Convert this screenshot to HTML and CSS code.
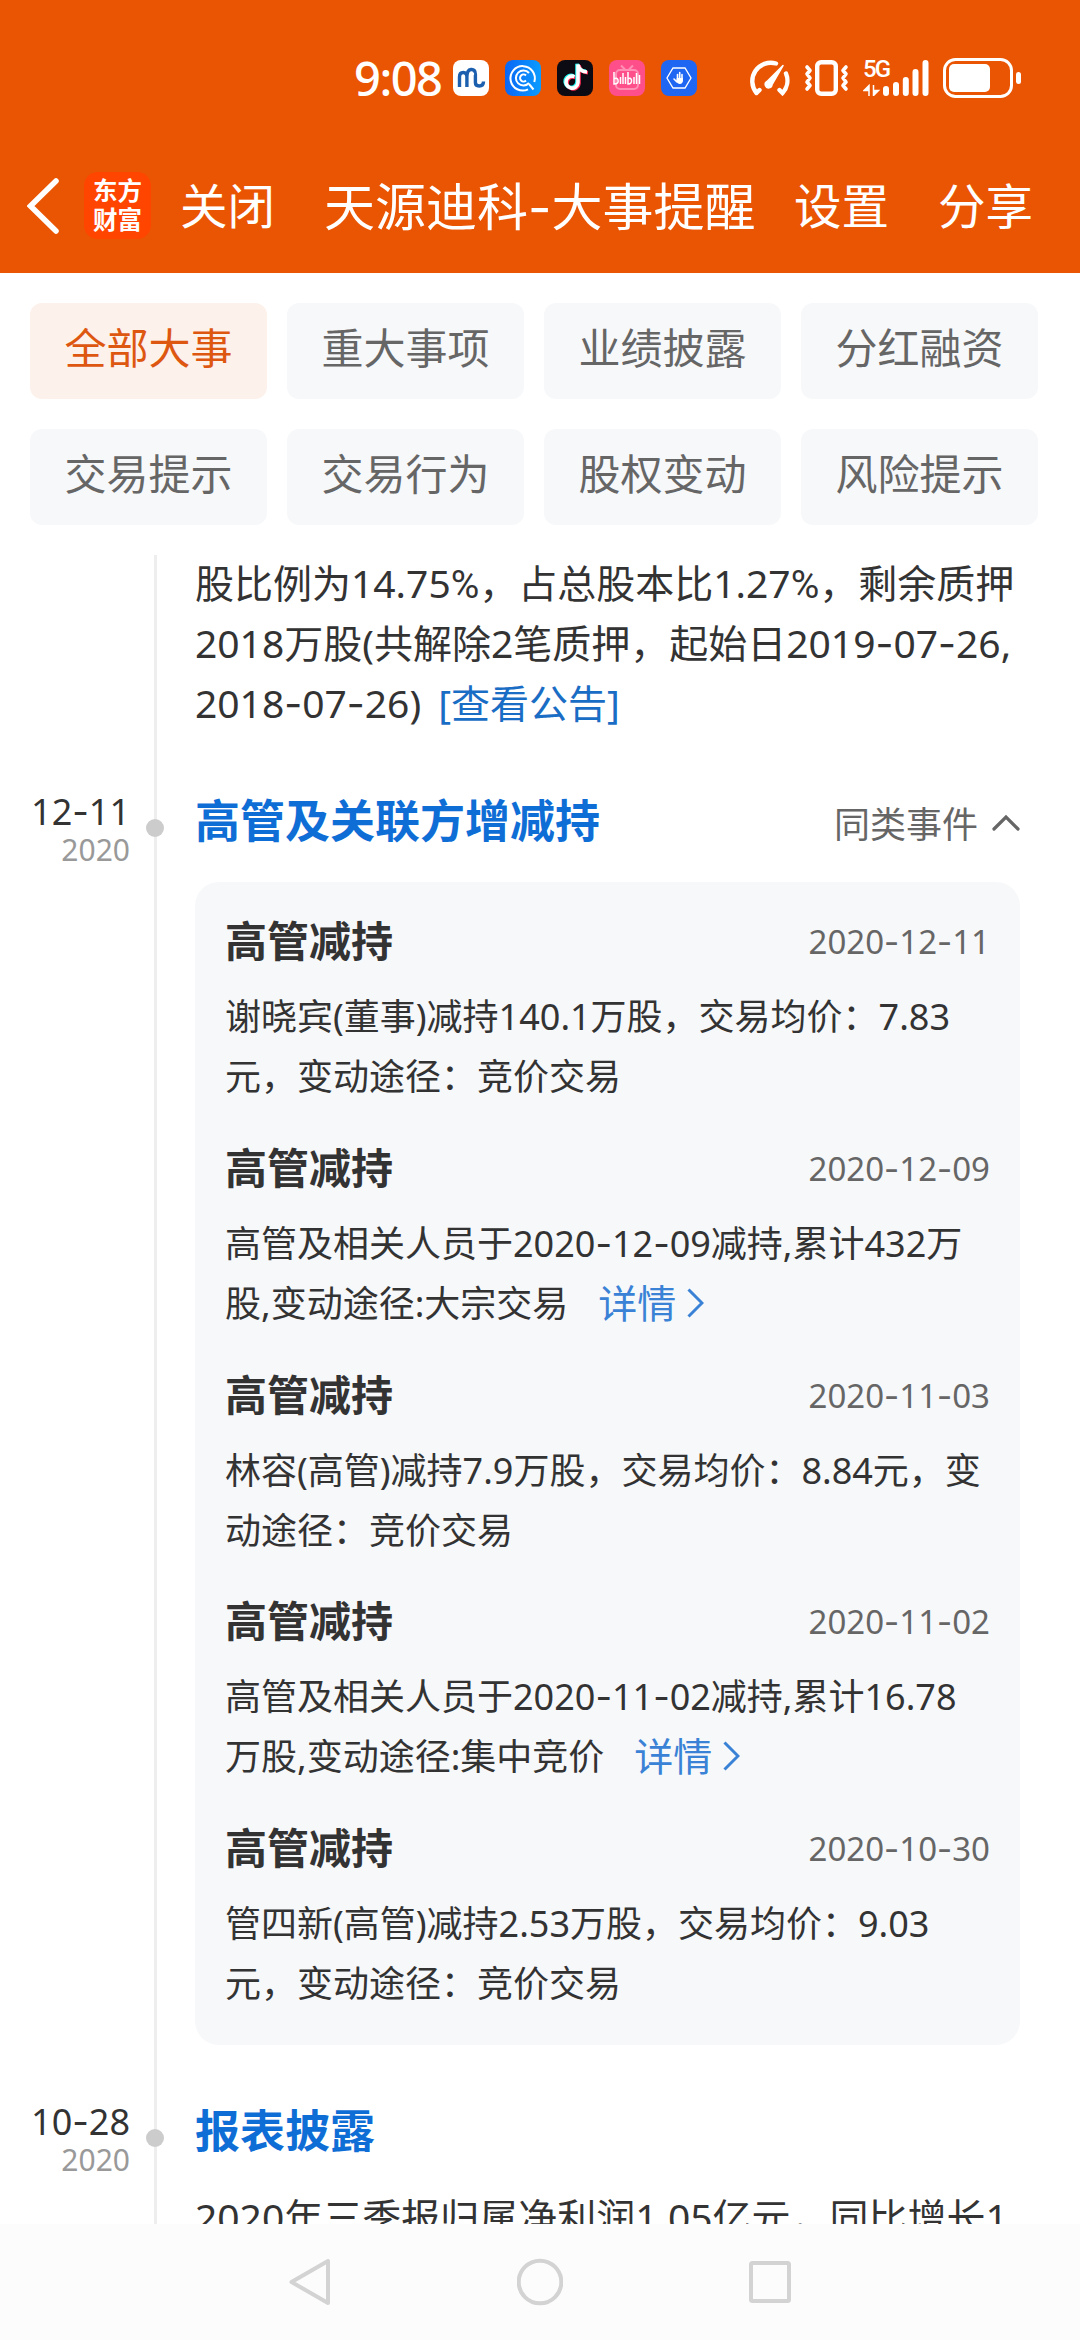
FILE: index.html
```html
<!DOCTYPE html>
<html lang="zh-CN">
<head>
    <meta charset="UTF-8">
    <meta name="viewport" content="width=device-width, initial-scale=1.0">
    <title>天源迪科-大事提醒</title>
    <link rel="stylesheet" href="styles.css">
</head>
<body>
    <div class="screen">
        <div class="status-bar">
            <span class="clock">9:08</span>
            <div class="app-icons">
                <svg width="36" height="36" viewBox="0 0 36 36">
                    <rect width="36" height="36" rx="8" fill="#fff"/>
                    <path d="M6.500 27V17q0-4.500 3.700-4.500t3.700 4.500v10M13.900 17q0-7 4-7.500 4.500-.5 4.500 5v8q0 3.500 3.800 3.500 4.300 0 4.300-4.500" fill="none" stroke="#1b5fae" stroke-width="3.400"/>
                    <circle cx="20" cy="14" r="1.200" fill="#fff"/>
                </svg>
                <svg width="36" height="36" viewBox="0 0 36 36">
                    <defs>
                        <linearGradient id="blue" x1="0" x2="1"><stop offset="0" stop-color="#0a66f5"/><stop offset="1" stop-color="#0b9cff"/></linearGradient>
                    </defs>
                    <rect width="36" height="36" rx="8" fill="url(#blue)"/>
                    <g fill="none" stroke="#fff" stroke-width="2">
                        <path d="M23 29.300A12.200 12.200 0 1 1 29.300 22M24 24l4.500 5.500"/>
                        <path d="M24 23a7.500 7.500 0 1 1 0-10"/>
                        <path d="M21 20.500a3.500 3.500 0 1 1 0-5"/>
                    </g>
                </svg>
                <svg width="36" height="36" viewBox="0 0 36 36">
                    <rect width="36" height="36" rx="8" fill="#0c0b14"/>
                    <g fill="none" stroke-width="3.600">
                        <path d="M17.500 16.700a6 6 0 1 0 3.500 6V4.500q1 7 9 7.500" stroke="#fe2c55" transform="translate(1 .8)"/>
                        <path d="M17.500 16.700a6 6 0 1 0 3.500 6V4.500q1 7 9 7.500" stroke="#25f4ee" transform="translate(-1 -.8)"/>
                        <path d="M17.500 16.700a6 6 0 1 0 3.500 6V4.500q1 7 9 7.500" stroke="#fff"/>
                    </g>
                </svg>
                <svg width="36" height="36" viewBox="0 0 36 36">
                    <rect width="36" height="36" rx="8" fill="#ff4f8b"/>
                    <rect x="7" y="10" width="22" height="19" rx="4" fill="none" stroke="#ff8fb4" stroke-width="2"/>
                    <path d="M12 5.500l4 4M24 5.500l-4 4" stroke="#ff8fb4" stroke-width="2"/>
                    <path d="M5 12v12q5 0 4-4-1-3-4-1M11.500 17v7M14 13v11M16.500 17v7M19 12v12q4 0 3.500-4-1-3-3.500-1M25 17v7M27.500 13v11M30.500 15v9" fill="none" stroke="#fff" stroke-width="1.500"/>
                </svg>
                <svg width="36" height="36" viewBox="0 0 36 36">
                    <rect width="36" height="36" rx="8" fill="#1f66f2"/>
                    <path d="M12 8h12l6 10-6 10H12L6 18z" fill="none" stroke="#fff" stroke-width="1.300"/>
                    <path d="M13 19l3 3M16.500 21v-6.500M18.700 20v-7.500M21 21v-6.500" stroke="#fff" stroke-width="1.600" stroke-linecap="round"/>
                    <path d="M15.700 18h6.200v3q-.5 3-3 3t-3.500-3z" fill="#fff"/>
                </svg>
            </div>
            <div class="sys-icons">
                <svg width="42" height="36" viewBox="0 0 42 36" fill="none" stroke="#fff" stroke-width="4.400" stroke-linecap="round">
                    <path d="M8.500 33A18.500 18.500 0 0 1 28 3.500M8.500 33l3-3M38 13.500A18.500 18.500 0 0 1 34.500 33l-3-3"/>
                    <path d="M35 5.500L24 24.500a3.400 3.400 0 1 1-5-3z" fill="#fff" stroke-width="1.500" stroke-linejoin="round"/>
                </svg>
                <svg width="45" height="36" viewBox="0 0 45 36" fill="none" stroke="#fff" stroke-linecap="round" stroke-linejoin="round">
                    <rect x="13.200" y="2.200" width="18.600" height="31.600" rx="4" stroke-width="4.400"/>
                    <path d="M3 7l3 3.500-3 3.500 3 4-3 4 3 3.500-3 3.500M42 7l-3 3.500 3 3.500-3 4 3 4-3 3.500 3 3.500" stroke-width="3.600"/>
                </svg>
                <div class="network">
                    <span class="net-type">5G</span>
                    <svg width="68" height="36" viewBox="0 0 68 36">
                        <path d="M6 36V25.500L1 30.500h5M10.500 25v10.500l5-5h-5" fill="#fff" stroke="#fff" stroke-width="1.500"/>
                        <g stroke="#fff" stroke-width="6" stroke-linecap="round">
                            <path d="M23 29v4M33 25v8M42.800 20v13M52.500 12v21M62.500 3v30"/>
                        </g>
                    </svg>
                </div>
                <svg class="battery" width="78" height="40" viewBox="0 0 78 40">
                    <rect x="1.500" y="1.500" width="67" height="37" rx="11" fill="none" stroke="#fff" stroke-width="3"/>
                    <rect x="6" y="6" width="41" height="28" rx="5" fill="#fff"/>
                    <rect x="73" y="14" width="5" height="12" rx="2.500" fill="#fff"/>
                </svg>
            </div>
        </div>

        <div class="header">
            <svg class="back" width="32" height="56" viewBox="0 0 32 56">
                <path d="M29 3L3.500 28 29 53" fill="none" stroke="#fff" stroke-width="5.500" stroke-linecap="round"/>
            </svg>
            <div class="logo">东方<br>财富</div>
            <span class="close">关闭</span>
            <h1>天源迪科<i>-</i>大事提醒</h1>
            <span class="setting">设置</span>
            <span class="share">分享</span>
        </div>

        <div class="tabs">
            <div class="tab active">全部大事</div>
            <div class="tab">重大事项</div>
            <div class="tab">业绩披露</div>
            <div class="tab">分红融资</div>
            <div class="tab">交易提示</div>
            <div class="tab">交易行为</div>
            <div class="tab">股权变动</div>
            <div class="tab">风险提示</div>
        </div>

        <div class="timeline">
            <div class="event first">
                <div class="date"></div>
                <div class="axis"></div>
                <div class="content">
                    <p class="text">股比例为14.75<b>%</b>，占总股本比1.27<b>%</b>，剩余质押<br>2018万股(共解除2笔质押，起始日2019<i>-</i>07<i>-</i>26,<br>2018<i>-</i>07<i>-</i>26) <a>[查看公告]</a></p>
                </div>
            </div>

            <div class="event second">
                <div class="date">
                    <div class="day">12<i>-</i>11</div>
                    <div class="year">2020</div>
                </div>
                <div class="axis"><span class="dot"></span></div>
                <div class="content">
                    <div class="event-head">
                        <h2>高管及关联方增减持</h2>
                        <span class="more">同类事件
                            <svg width="28" height="17" viewBox="0 0 28 17"><path d="M2 15L14 3l12 12" fill="none" stroke="#666" stroke-width="3.200" stroke-linecap="round"/></svg>
                        </span>
                    </div>
                    <div class="card">
                        <div class="item">
                            <div class="item-head"><h3>高管减持</h3><span>2020<i>-</i>12<i>-</i>11</span></div>
                            <p>谢晓宾(董事)减持140.1万股，交易均价：7.83<br>元，变动途径：竞价交易</p>
                        </div>
                        <div class="item">
                            <div class="item-head"><h3>高管减持</h3><span>2020<i>-</i>12<i>-</i>09</span></div>
                            <p>高管及相关人员于2020<i>-</i>12<i>-</i>09减持,累计432万<br>股,变动途径:大宗交易<a class="detail">详情<svg width="17" height="30" viewBox="0 0 17 30"><path d="M1.500 1.500L15 15 1.500 28.500" fill="none" stroke="#3a82d6" stroke-width="3"/></svg></a></p>
                        </div>
                        <div class="item">
                            <div class="item-head"><h3>高管减持</h3><span>2020<i>-</i>11<i>-</i>03</span></div>
                            <p>林容(高管)减持7.9万股，交易均价：8.84元，变<br>动途径：竞价交易</p>
                        </div>
                        <div class="item">
                            <div class="item-head"><h3>高管减持</h3><span>2020<i>-</i>11<i>-</i>02</span></div>
                            <p>高管及相关人员于2020<i>-</i>11<i>-</i>02减持,累计16.78<br>万股,变动途径:集中竞价<a class="detail">详情<svg width="17" height="30" viewBox="0 0 17 30"><path d="M1.500 1.500L15 15 1.500 28.500" fill="none" stroke="#3a82d6" stroke-width="3"/></svg></a></p>
                        </div>
                        <div class="item">
                            <div class="item-head"><h3>高管减持</h3><span>2020<i>-</i>10<i>-</i>30</span></div>
                            <p>管四新(高管)减持2.53万股，交易均价：9.03<br>元，变动途径：竞价交易</p>
                        </div>
                    </div>
                </div>
            </div>

            <div class="event third">
                <div class="date">
                    <div class="day">10<i>-</i>28</div>
                    <div class="year">2020</div>
                </div>
                <div class="axis"><span class="dot"></span></div>
                <div class="content">
                    <div class="event-head">
                        <h2>报表披露</h2>
                    </div>
                    <p class="text">2020年三季报归属净利润1.05亿元，同比增长1</p>
                </div>
            </div>
        </div>

        <div class="nav-bar">
            <svg width="46" height="48" viewBox="0 0 46 48"><path d="M4.500 24L41 3v42z"/></svg>
            <svg width="46" height="48" viewBox="0 0 46 48"><circle cx="23" cy="24" r="21.300"/></svg>
            <svg width="46" height="48" viewBox="0 0 46 48"><rect x="4" y="5" width="38" height="38" rx="1.500"/></svg>
        </div>
    </div>
</body>
</html>
```
FILE: styles.css
```css
* {
    box-sizing: border-box;
}
body {
    margin: 0;
    font-family: "Noto Sans", "Noto Sans CJK SC", sans-serif;
    color: #333;
    background: #fff;
}
h1, h2, h3, p {
    margin: 0;
}
/* wide hyphen in dates */
i {
    font-family: Inter, sans-serif;
    font-style: normal;
    line-height: 1;
}
/* narrow percent sign */
b {
    font-family: Roboto, sans-serif;
    font-weight: 400;
    line-height: 1;
}
svg {
    display: block;
    flex: none;
}
.screen {
    width: 1080px;
    height: 2340px;
    display: flex;
    flex-direction: column;
    overflow: hidden;
    white-space: nowrap;
}

/* status bar */
.status-bar {
    height: 138px;
    padding: 18px 59px 0 354px;
    display: flex;
    align-items: center;
    background: #ea5504;
    color: #fff;
    flex: none;
}
.clock {
    width: 99px;
    font-size: 47px;
    line-height: 60px;
    font-weight: 500;
    letter-spacing: -1.500px;
}
.app-icons {
    display: flex;
    gap: 16px;
}
.sys-icons {
    display: flex;
    align-items: center;
    margin-left: auto;
    gap: 14px;
}
.network {
    position: relative;
    width: 68px;
    height: 36px;
}
.net-type {
    position: absolute;
    left: 0;
    top: -3px;
    font-family: Roboto, sans-serif;
    font-size: 24px;
    line-height: 24px;
    font-weight: 500;
    letter-spacing: -2px;
}
.battery {
    margin-left: -2px;
}

/* header */
.header {
    height: 135px;
    padding-left: 27px;
    display: flex;
    align-items: center;
    background: #ea5504;
    color: #fff;
    font-size: 47.500px;
    line-height: 60px;
    flex: none;
}
.header .logo {
    width: 67px;
    height: 67px;
    margin-left: 25px;
    padding-top: 4px;
    border-radius: 14px;
    background: #ff4500;
    font-size: 24.500px;
    line-height: 29px;
    font-weight: 700;
    text-align: center;
}
.header .close {
    margin-left: 29px;
}
.header h1 {
    width: 432px;
    margin-left: 49px;
    font-size: 51px;
    font-weight: 400;
}
.header .setting {
    margin-left: 38px;
}
.header .share {
    margin-left: 49px;
}

/* category tabs */
.tabs {
    padding: 30px 30px 0;
    display: grid;
    grid-template-columns: repeat(4, 237px);
    grid-auto-rows: 96px;
    gap: 30px 20px;
    flex: none;
}
.tab {
    border-radius: 12px;
    background: #f7f8fa;
    color: #666;
    font-size: 42px;
    line-height: 89px;
    text-align: center;
}
.tab.active {
    background: #fdf1eb;
    color: #dd5711;
}

/* timeline */
.timeline {
    flex: 1;
    min-height: 0;
    margin-top: 30px;
    overflow: hidden;
}
.event {
    display: flex;
}
.first {
    height: 234px;
}
.second {
    height: 1310px;
}
.third {
    height: 200px;
}
.date {
    width: 130px;
    text-align: right;
}
.day {
    padding-top: 2px;
    font-size: 36px;
    line-height: 42px;
}
.year {
    color: #999;
    font-size: 30px;
    line-height: 34px;
}
.axis {
    width: 3px;
    margin-left: 24px;
    background: #eee;
}
.dot {
    display: block;
    width: 18px;
    height: 18px;
    margin: 30px 0 0 -8px;
    border-radius: 50%;
    background: #ccc;
}
.content {
    width: 825px;
    margin-left: 38px;
}
.text {
    font-size: 39px;
    line-height: 60px;
}
.first .text {
    margin-top: -2px;
}
.text a {
    margin-left: 7px;
    color: #1a6dc4;
}
.event-head {
    height: 93px;
    display: flex;
    justify-content: space-between;
}
.event-head h2 {
    color: #0f6ed6;
    font-size: 45px;
    line-height: 64px;
    font-weight: 700;
}
.more {
    height: 67px;
    display: flex;
    align-items: center;
    gap: 14px;
    color: #666;
    font-size: 36px;
}
.third .event-head {
    height: 88px;
}
.card {
    height: 1163px;
    padding: 29px 30px 0;
    border-radius: 24px;
    background: #f7f8fa;
}
.item {
    height: 226.800px;
}
.item-head {
    height: 76px;
    display: flex;
    justify-content: space-between;
    line-height: 60px;
}
.item-head h3 {
    font-size: 42px;
    font-weight: 700;
}
.item-head span {
    color: #666;
    font-size: 33px;
    line-height: 62px;
}
.item p {
    font-size: 36px;
    line-height: 60px;
}
.detail {
    display: inline-flex;
    align-items: center;
    gap: 11px;
    height: 58px;
    margin-left: 30px;
    color: #3a82d6;
    font-size: 39px;
    vertical-align: top;
}

/* system navigation */
.nav-bar {
    height: 116px;
    display: flex;
    justify-content: center;
    align-items: center;
    gap: 184px;
    background: #fcfcfc;
    flex: none;
}
.nav-bar svg {
    fill: none;
    stroke: #d3d3d3;
    stroke-width: 4;
    stroke-linejoin: round;
}
```
